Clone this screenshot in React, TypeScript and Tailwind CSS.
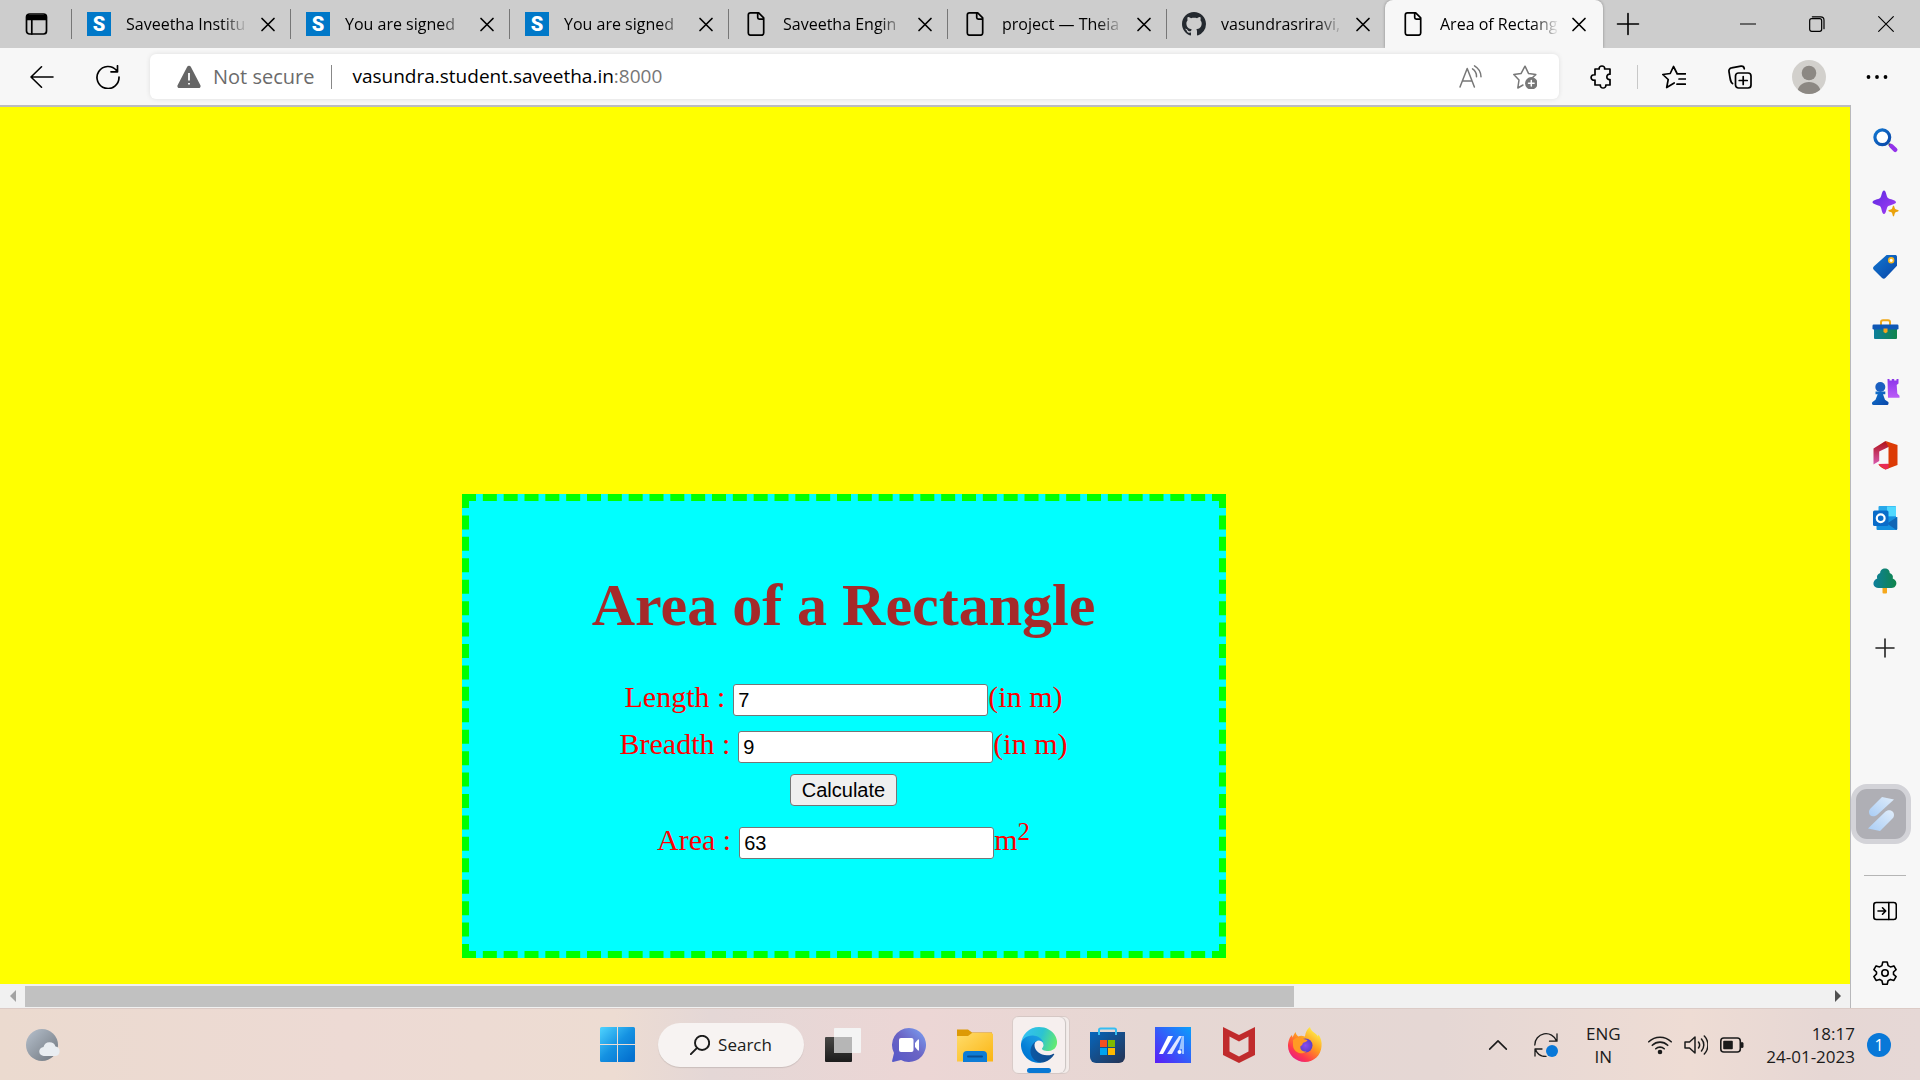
import { useState } from 'react';
import type { ReactNode } from 'react';

function Stroke({ children, className = 'size-6', width = 1.5 }: { children: ReactNode; className?: string; width?: number }) {
  return (
    <svg viewBox="0 0 24 24" className={className} fill="none" stroke="currentColor" strokeWidth={width} strokeLinecap="round" strokeLinejoin="round" aria-hidden="true">
      {children}
    </svg>
  );
}

function IconButton({ label, className, children }: { label: string; className?: string; children: ReactNode }) {
  return (
    <button type="button" aria-label={label} className={`flex shrink-0 items-center justify-center ${className ?? ''}`}>
      {children}
    </button>
  );
}

/* ---------- Tab strip ---------- */

const SiteIcon = () => (
  <span className="flex size-6 items-center justify-center bg-[#0078c8] font-[Roboto,sans-serif] text-xl font-black leading-6 text-white">S</span>
);

const PageIcon = () => (
  <Stroke className="size-6" width={1.7}>
    <path d="M5.5 .9h8.200l5 5V21a2.200 2.200 0 0 1-2.200 2.200h-11A2.200 2.200 0 0 1 3.300 21V3.100A2.200 2.200 0 0 1 5.500 .9zM12.700 1.200v4.300a1.600 1.600 0 0 0 1.600 1.600h4.200" transform="translate(1 0)" />
  </Stroke>
);

const GithubIcon = () => (
  <svg viewBox="0 0 16 16" className="size-6" fill="#24292f" aria-hidden="true">
    <path d="M8 0C3.580 0 0 3.580 0 8c0 3.540 2.290 6.530 5.470 7.590.4.070.55-.17.55-.38 0-.19-.01-.82-.01-1.490-2.010.37-2.530-.49-2.690-.94-.09-.23-.48-.94-.82-1.130-.28-.15-.68-.52-.01-.53.63-.01 1.080.58 1.230.82.72 1.210 1.870.87 2.330.66.070-.52.28-.87.510-1.070-1.780-.2-3.640-.89-3.640-3.950 0-.87.310-1.590.82-2.150-.08-.2-.36-1.020.080-2.120 0 0 .67-.21 2.200.82.64-.18 1.320-.27 2-.27s1.360.090 2 .27c1.530-1.040 2.200-.82 2.200-.82.44 1.100.16 1.920.080 2.120.510.56.82 1.270.82 2.150 0 3.070-1.870 3.750-3.650 3.950.29.25.54.73.54 1.480 0 1.070-.01 1.930-.01 2.200 0 .210.150.460.550.380A8.010 8.010 0 0 0 16 8c0-4.420-3.580-8-8-8z" />
  </svg>
);

const tabs = [
  { title: 'Saveetha Institu', icon: <SiteIcon /> },
  { title: 'You are signed', icon: <SiteIcon /> },
  { title: 'You are signed', icon: <SiteIcon /> },
  { title: 'Saveetha Engin', icon: <PageIcon /> },
  { title: 'project — Theia', icon: <PageIcon /> },
  { title: 'vasundrasriravi,', icon: <GithubIcon /> },
  { title: 'Area of Rectang', icon: <PageIcon />, active: true },
];

function TabStrip() {
  return (
    <header className="flex h-12 shrink-0 items-end bg-[#cdcdcd] text-black">
      <IconButton label="Tab actions" className="h-12 w-[71px]">
        <Stroke width={1.7}>
          <rect x="2.500" y="2" width="20" height="20" rx="3" />
          <path d="M3 3.500h19v3.800H3z" fill="currentColor" />
          <path d="M7.800 8v14" />
        </Stroke>
      </IconButton>
      <nav className="flex h-12 items-end" aria-label="Tabs">
        {tabs.map((t, i) => (
          <div
            key={i}
            className={
              t.active
                ? 'flex h-12 w-[218px] items-center rounded-t-lg bg-[#f7f7f7] pr-3 pl-4 shadow-[0_0_3px_rgba(0,0,0,0.35)]'
                : 'flex h-12 w-[219px] items-center pr-[10px]'
            }
          >
            {!t.active && <span className="mr-[15px] h-[30px] w-px shrink-0 bg-[#777]" />}
            <span className="shrink-0">{t.icon}</span>
            <span className="ml-[15px] flex-1 text-base whitespace-nowrap [mask-image:linear-gradient(to_right,black_78%,transparent_100%)]">
              {t.title}
            </span>
            <IconButton label="Close tab" className="ml-2 size-6">
              <Stroke width={1.7}>
                <path d="M6 6.500l12 12M18 6.500l-12 12" />
              </Stroke>
            </IconButton>
          </div>
        ))}
      </nav>
      <IconButton label="New tab" className="h-12 w-[50px]">
        <Stroke width={1.6}>
          <path d="M12 1.500v21M1.500 12h21" />
        </Stroke>
      </IconButton>
      <div className="ml-auto flex h-12">
        <IconButton label="Minimize" className="w-[69px]">
          <Stroke className="size-4" width={1.6}><path d="M0 12h24" /></Stroke>
        </IconButton>
        <IconButton label="Restore" className="w-[69px]">
          <Stroke className="size-4" width={1.8}>
            <rect x="1" y="4" width="18" height="19" rx="3" />
            <path d="M5 1.200h12.500a5 5 0 0 1 5 5V19" />
          </Stroke>
        </IconButton>
        <IconButton label="Close window" className="w-[69px]">
          <Stroke className="size-4" width={1.7}><path d="M1 1l22 22M23 1L1 23" /></Stroke>
        </IconButton>
      </div>
    </header>
  );
}

/* ---------- Toolbar ---------- */

function Toolbar() {
  return (
    <div className="flex h-[57px] shrink-0 items-center bg-[#f7f7f7] text-black">
      <IconButton label="Back" className="h-10 w-[84px]">
        <Stroke width={1.6}><path d="M23 12H1M11.500 1.800L1 12l10.500 10.200" /></Stroke>
      </IconButton>
      <IconButton label="Refresh" className="mr-[18px] h-10 w-12">
        <Stroke width={1.7}>
          <path d="M20.500 5.500A11 11 0 1 0 23 12M21.500 .8v6h-6.500" />
        </Stroke>
      </IconButton>
      <div className="flex h-[45px] flex-1 items-center rounded-md bg-white shadow-[0_0_5px_rgba(0,0,0,0.1)]">
        <svg viewBox="0 0 24 24" className="ml-[27px] size-6" aria-hidden="true">
          <path d="M10.200 1.800a2 2 0 0 1 3.600 0l9.600 18.400a2 2 0 0 1-1.800 2.900H2.400a2 2 0 0 1-1.800-2.900z" fill="#666" />
          <path d="M12 8v7.500M12 18v1.600" stroke="#fff" strokeWidth="1.800" />
        </svg>
        <span className="ml-3 text-[20px] text-[#6b6b6b]">Not secure</span>
        <span className="mr-5 ml-[17px] h-6 w-px bg-[#888]" />
        <div className="flex flex-1 items-center text-[19px]">
          <input aria-label="Address" className="field-sizing-content bg-transparent text-black outline-none" defaultValue="vasundra.student.saveetha.in" />
          <span className="text-[#777]">:8000</span>
        </div>
        <IconButton label="Read aloud" className="h-10 w-[54px] text-[#777]">
          <Stroke width={1.500}>
            <path d="M1 22L8.200 3.500 15.400 22M3.700 16h9M13.500 3.800a9 9 0 0 1 4 8M15.500 .8a13 13 0 0 1 6.500 11" />
          </Stroke>
        </IconButton>
        <IconButton label="Add to favorites" className="mr-[7px] h-10 w-[54px] text-[#777]">
          <Stroke width={1.500}>
            <path d="M10 20l-5.200 3 1.200-8L.8 9.600l7.200-1L12 1.200l3.600 7.400 7.200 1-3 2.600" />
            <circle cx="18.300" cy="18.300" r="5.500" fill="#777" />
            <path d="M18.300 15.500v5.600M15.500 18.300h5.600" stroke="#fff" />
          </Stroke>
        </IconButton>
      </div>
      <IconButton label="Extensions" className="ml-[10px] h-10 w-[66px]">
        <Stroke width={1.700}>
          <path d="M5 4h4.200c-.8-4 6.300-4 5.400 0H20v5.200c-4.200-.6-4.200 6 0 5.300V20h-4.200c.8 4-6.200 4-5.400 0H5v-4.800c-5.200.8-5.200-6.200 0-5.400z" />
        </Stroke>
      </IconButton>
      <span className="ml-[2px] h-6 w-px bg-[#c8c8c8]" />
      <IconButton label="Favorites" className="ml-1 h-10 w-16">
        <Stroke width={1.700}>
          <path d="M15 8.800h8.500M17 14h6.500M15 19.200h8.500M12.200 18l-7.500 4.500 1.500-8L.8 9.500l7.400-1L11.500 1.500l3.300 6.500" />
        </Stroke>
      </IconButton>
      <IconButton label="Collections" className="h-10 w-[68px]">
        <Stroke width={1.700}>
          <rect x="7.500" y="8" width="15.500" height="15" rx="3" />
          <path d="M15.200 11.500v8M11.200 15.500h8M4.500 18.500C2.500 17.500 2.300 15 1 6.500a3 3 0 0 1 2.500-3.600L13 1.200a3 3 0 0 1 3.300 2.600" />
        </Stroke>
      </IconButton>
      <IconButton label="Profile" className="h-10 w-[70px]">
        <svg viewBox="0 0 34 34" className="size-[34px]" aria-hidden="true">
          <clipPath id="avatar"><circle cx="17" cy="17" r="17" /></clipPath>
          <g clipPath="url(#avatar)">
            <rect width="34" height="34" fill="#d2d0cc" />
            <circle cx="17" cy="13" r="7.300" fill="#8c8883" />
            <path d="M5.500 34c-1.500-16 24.500-16 23 0z" fill="#8c8883" />
          </g>
        </svg>
      </IconButton>
      <IconButton label="Settings and more" className="mr-[10px] h-10 w-[66px]">
        <svg viewBox="0 0 24 24" className="size-6" aria-hidden="true">
          <circle cx="3.500" cy="12" r="1.900" /><circle cx="12" cy="12" r="1.900" /><circle cx="20.500" cy="12" r="1.900" />
        </svg>
      </IconButton>
    </div>
  );
}

/* ---------- Page ---------- */

const fieldClass = 'h-8 w-[255px] rounded-[3px] border border-[#767676] bg-white px-1 font-["Liberation_Sans",sans-serif] text-xl text-black';

function AreaPage() {
  const [length, setLength] = useState('7');
  const [breadth, setBreadth] = useState('9');
  const [area, setArea] = useState('63');
  return (
    <main className="flex min-h-0 flex-1 flex-col justify-end overflow-hidden bg-[#ffff00] pb-[26px]">
      <form
        className={'ml-[calc(25%-1px)] w-[764px] border-[7px] border-dashed border-[#00ff00] bg-[#00ffff] pt-[74px] pb-[92px] text-center font-["Liberation_Serif",serif] text-[30px] leading-[34px] text-[#ff0000]'}
        onSubmit={(e) => {
          e.preventDefault();
          setArea(String(Number(length) * Number(breadth)));
        }}
      >
        <h1 className="mb-[45px] text-6xl leading-[60px] font-bold text-[#a52a2a]">Area of a Rectangle</h1>
        <div className="flex h-[47px] items-baseline justify-center">
          <label htmlFor="length" className="mr-2">Length :</label>
          <input id="length" className={fieldClass} value={length} onChange={(e) => setLength(e.target.value)} />
          <span>(in m)</span>
        </div>
        <div className="flex h-[47px] items-baseline justify-center">
          <label htmlFor="breadth" className="mr-2">Breadth :</label>
          <input id="breadth" className={fieldClass} value={breadth} onChange={(e) => setBreadth(e.target.value)} />
          <span>(in m)</span>
        </div>
        <div className="mb-0.5 flex h-[47px] justify-center">
          <button type="submit" className={'h-8 rounded-[4px] border border-[#767676] bg-[#efefef] px-[11px] font-["Liberation_Sans",sans-serif] text-xl leading-7 text-black'}>
            Calculate
          </button>
        </div>
        <div className="flex items-baseline justify-center">
          <label htmlFor="area" className="mr-2">Area :</label>
          <input id="area" className={fieldClass} value={area} onChange={(e) => setArea(e.target.value)} />
          <span>m<sup className="-top-[10px] text-[25px]">2</sup></span>
        </div>
      </form>
    </main>
  );
}

function ScrollBar() {
  return (
    <div className="flex h-6 shrink-0 items-center bg-[#f1f1f1]">
      <span className="flex w-[25px] justify-center">
        <svg viewBox="0 0 6 12" className="h-3 w-1.5" fill="#a3a3a3" aria-hidden="true"><path d="M6 0v12L0 6z" /></svg>
      </span>
      <div className="h-[21px] flex-1"><div className="h-full w-[70.5%] bg-[#c1c1c1]" /></div>
      <span className="flex w-[25px] justify-center">
        <svg viewBox="0 0 6 12" className="h-3 w-1.5" fill="#505050" aria-hidden="true"><path d="M0 0v12l6-6z" /></svg>
      </span>
    </div>
  );
}

/* ---------- Sidebar ---------- */

const sideIcons: { label: string; art: ReactNode }[] = [
  {
    label: 'Search',
    art: (
      <>
        <path d="M16 16l2.500 2.500" stroke="#444" strokeWidth="2.500" />
        <circle cx="9.300" cy="9.300" r="7.400" fill="#fff" stroke="url(#sbBlue)" strokeWidth="3.200" />
        <path d="M18.300 18l4 3.800" stroke="#9333ea" strokeWidth="4.400" strokeLinecap="round" />
      </>
    ),
  },
  {
    label: 'Discover',
    art: (
      <>
        <path d="M11-.5c2.300 0 2.200 6 4 7.500 1.700 1.400 8 2 8 4.200s-6.300 2.600-8 4.100c-1.800 1.600-1.700 7.700-4 7.700s-2.200-6.200-3.900-7.700C5.500 13.800-.5 13.400-.5 11.200S5.500 8.400 7.100 7C8.800 5.500 8.700-.5 11-.5z" fill="url(#sbPurple)" />
        <path d="M20.500 14.500c.9 0 1 2.900 1.800 3.600.6.6 3.500.8 3.500 1.700s-2.900 1.100-3.500 1.700c-.8.700-.9 4-1.800 4s-1-3.300-1.800-4c-.6-.6-3.500-.8-3.500-1.700s2.900-1.100 3.500-1.700c.8-.7.900-3.600 1.800-3.600z" fill="#eaa20c" />
      </>
    ),
  },
  {
    label: 'Shopping',
    art: (
      <>
        <path d="M13 1.500L1 12.300c-1.300 1.300-1.300 2.300 0 3.600l7.800 7.800c1.500 1.300 2.500 1.300 3.800 0L24 11.700V3c0-1.500-.8-2-2-2h-7.500c-.6 0-1.100.1-1.500.5z" fill="url(#sbBlue)" />
        <circle cx="18.200" cy="6.300" r="2.400" fill="#fff" stroke="#fbb81d" strokeWidth="1.600" />
      </>
    ),
  },
  {
    label: 'Tools',
    art: (
      <>
        <path d="M8 8V5.200c0-1.200.8-2 2-2h5c1.200 0 2 .8 2 2V8" fill="none" stroke="#f0a818" strokeWidth="2" />
        <rect x="1" y="10" width="23" height="12" rx="1" fill="url(#sbTeal)" />
        <rect x="-.5" y="7.500" width="26" height="5" rx="1.200" fill="#0f57b5" />
        <path d="M10.500 11.500h4V15l-2 1.300-2-1.300z" fill="#f9a51a" />
      </>
    ),
  },
  {
    label: 'Games',
    art: (
      <>
        <path d="M14.500-1h2v1.500h2.300V-1h2.400v1.500h2.300V-1h2v4.500L23.700 5l.6 8.500 2.200 2.300v2H15z" fill="url(#sbPurple2)" />
        <circle cx="7.300" cy="7" r="5" fill="#1a5fc0" />
        <path d="M2.500 11.500h9.800v2.700H10l2 5.500 3.300 2.300c.6.800.3 3-1 3H.5c-1.600 0-2-2.200-1-3l3-2.300 2.200-5.500H2.500z" fill="url(#sbBlue)" />
      </>
    ),
  },
  {
    label: 'Microsoft 365',
    art: (
      <>
        <path d="M.5 5.500L12.500-2l4 5.500L6.200 8.500V18L.5 21.500z" fill="url(#sbRed)" />
        <path d="M12.500-2L24.500 2v20L12.500 26.500c-2.500-.7-5-2.500-6.700-4.500l9.700-1V4z" fill="#dc3b06" />
        <path d="M5 21l10.500-.3v4.700l-3 1.100z" fill="#e82b54" />
      </>
    ),
  },
  {
    label: 'Outlook',
    art: (
      <>
        <rect x="5.500" y="0" width="17.500" height="14" rx="1" fill="#28a8ea" />
        <path d="M14 .5h9V10h-9z" fill="#50d9ff" />
        <path d="M3.500 11h20.700v12a1 1 0 0 1-1 1H4.500a1 1 0 0 1-1-1z" fill="#1490df" />
        <path d="M24.200 11L14 17.500l9 6.300c.7 0 1.200-.4 1.200-1z" fill="#1066b5" />
        <rect x="0" y="4.500" width="15.500" height="15.500" rx="1.500" fill="#0a6cc9" />
        <circle cx="7.700" cy="12.200" r="3.900" fill="none" stroke="#fff" strokeWidth="2.200" />
      </>
    ),
  },
  {
    label: 'Drop',
    art: (
      <>
        <rect x="9.500" y="17" width="4.500" height="7.500" rx="1" fill="#f5a81c" />
        <path d="M12-.5c2.800 0 4.800 2 4.700 4.500 2.700.8 3.800 3.300 3 5.500 3.300 1.500 4.200 4 3.500 6-.7 2.500-2.500 3.500-5 3.500H5.500c-2.500 0-4.500-1.300-5-3.500-.5-2.500 1-5 3.700-6-.8-2.200.3-4.700 3-5.500C7.100 1.500 9.200-.5 12-.5z" fill="url(#sbTeal)" />
      </>
    ),
  },
];

function SideBar() {
  return (
    <aside className="flex w-[70px] shrink-0 flex-col items-center border-l border-[#b8b8bb] bg-[#f7f7f7] pt-[3px] pr-px">
      <svg className="absolute size-0" aria-hidden="true">
        <defs>
          <linearGradient id="sbBlue" x1="0" y1="0" x2="1" y2="1"><stop stopColor="#1277d0" /><stop offset="1" stopColor="#0a46a8" /></linearGradient>
          <linearGradient id="sbPurple" x1="0" y1="0" x2="1" y2="1"><stop stopColor="#5b2be0" /><stop offset="1" stopColor="#a63cf5" /></linearGradient>
          <linearGradient id="sbPurple2" x1="0" y1="0" x2="0" y2="1"><stop stopColor="#8b35ea" /><stop offset="1" stopColor="#bb5cf7" /></linearGradient>
          <linearGradient id="sbTeal" x1="0" y1="0" x2="1" y2="0"><stop stopColor="#0d7f9c" /><stop offset="1" stopColor="#10854a" /></linearGradient>
          <linearGradient id="sbRed" x1="0" y1="0" x2="0" y2="1"><stop stopColor="#b01217" /><stop offset="1" stopColor="#d85ab0" /></linearGradient>
        </defs>
      </svg>
      {sideIcons.map((s) => (
        <IconButton key={s.label} label={s.label} className="h-[63px] w-full">
          <svg viewBox="0 0 24 24" className="size-6 overflow-visible" fill="none" aria-hidden="true">{s.art}</svg>
        </IconButton>
      ))}
      <IconButton label="Customize sidebar" className="mt-1 h-[63px] w-full text-[#222]">
        <Stroke width={1.600}><path d="M12 3v18M3 12h18" /></Stroke>
      </IconButton>
      <IconButton label="Assistant" className="mt-auto mb-[31px] size-[60px] self-start rounded-2xl border-[5px] border-[#d3d3d8] bg-[#afafb5]">
        <svg viewBox="0 0 28 36" className="h-9 w-7" aria-hidden="true">
          <defs>
            <linearGradient id="wing" x1="0" y1="1" x2="1" y2="0"><stop stopColor="#a9cdf5" /><stop offset="1" stopColor="#e0edfb" /></linearGradient>
          </defs>
          <path d="M15 1l12 2.500L10 19c-3 2-8 2-8-3 0-2 1-3 2-4z" fill="url(#wing)" />
          <path d="M13 35L1 32.500 18 16c3-3 9-2 9 3 0 2-1 3-2 4z" fill="url(#wing)" />
        </svg>
      </IconButton>
      <span className="h-px w-[42px] bg-[#b5b5b5]" />
      <IconButton label="Hide sidebar" className="mt-1 h-[61px] w-full text-black">
        <Stroke width={1.600}>
          <rect x=".8" y="3.500" width="22.500" height="17" rx="2.500" />
          <path d="M15.800 3.500v17M5 12h7.500M9.500 8.800l3.200 3.200-3.200 3.200" />
        </Stroke>
      </IconButton>
      <IconButton label="Settings" className="mb-1 h-[63px] w-full text-black">
        <Stroke width={1.600}>
          <circle cx="12" cy="12" r="3.200" />
          <path d="M9.800 1h4.400l.9 3.600 2.300 1.300 3.500-1 2.200 3.800L20.500 11v2.400l2.600 2.200-2.200 3.800-3.500-1-2.300 1.300-.9 3.500H9.800l-.9-3.500-2.300-1.300-3.500 1L.9 15.600 3.500 13v-2L.9 8.700l2.200-3.800 3.500 1 2.300-1.300z" />
        </Stroke>
      </IconButton>
    </aside>
  );
}

/* ---------- Taskbar ---------- */

const WindowsLogo = () => (
  <svg viewBox="0 0 35 35" className="size-[35px]" aria-hidden="true">
    <defs>
      <linearGradient id="win" gradientUnits="userSpaceOnUse" x1="0" y1="0" x2="30" y2="32"><stop stopColor="#4fd4ff" /><stop offset=".55" stopColor="#1592e2" /><stop offset="1" stopColor="#0572d0" /></linearGradient>
    </defs>
    <path d="M1.500 0H17v17H0V1.500A1.500 1.500 0 0 1 1.500 0zM18 0h15.500A1.500 1.500 0 0 1 35 1.500V17H18zM0 18h17v17H1.500A1.500 1.500 0 0 1 0 33.500zM18 18h17v15.500a1.500 1.500 0 0 1-1.500 1.500H18z" fill="url(#win)" />
  </svg>
);

const TaskView = () => (
  <svg viewBox="0 0 36 34" className="h-[34px] w-9" aria-hidden="true">
    <defs><linearGradient id="tvd" x1="0" y1="0" x2="0" y2="1"><stop stopColor="#484846" /><stop offset="1" stopColor="#1c1c1c" /></linearGradient></defs>
    <rect x="0" y="9" width="27" height="25" rx="1" fill="url(#tvd)" />
    <rect x="9" y="0" width="27" height="25" rx="1" fill="#f4f4f4" />
    <path d="M9 9h18v16H9z" fill="#b6b6b6" />
  </svg>
);

const Chat = () => (
  <svg viewBox="0 0 34 34" className="size-[34px]" aria-hidden="true">
    <defs><linearGradient id="chat" x1="1" y1="0" x2="0" y2="1"><stop stopColor="#7ba4f5" /><stop offset=".5" stopColor="#6a63c4" /><stop offset="1" stopColor="#5558c8" /></linearGradient></defs>
    <path d="M17 0a17 17 0 1 1-8 32L1 34c-1 0-1-1-.7-2L2 25A17 17 0 0 1 17 0z" fill="url(#chat)" />
    <rect x="7" y="10" width="14.500" height="14" rx="2" fill="#fff" />
    <path d="M23 15l3-3.500h1v11h-1L23 19z" fill="#fff" />
  </svg>
);

const Folder = () => (
  <svg viewBox="0 0 36 34" className="h-[34px] w-9" aria-hidden="true">
    <defs><linearGradient id="fol" x1="0" y1="0" x2="1" y2="1"><stop stopColor="#ffdc6b" /><stop offset="1" stopColor="#fbb512" /></linearGradient></defs>
    <path d="M0 1.500h11l4 3h20V12H0z" fill="#dd9a06" />
    <path d="M0 8h11l4-3h19.500L36 6v27.500H0z" fill="url(#fol)" />
    <path d="M6 34V27a4 4 0 0 1 4-4h16a4 4 0 0 1 4 4v7z" fill="#0d7cd6" />
    <path d="M11 28.500h14" stroke="#0a4f94" strokeWidth="2" strokeLinecap="round" />
  </svg>
);

const Edge = () => (
  <svg viewBox="0 0 256 256" className="size-9" aria-hidden="true">
    <defs>
      <linearGradient id="e1" gradientUnits="userSpaceOnUse" x1="63" y1="177" x2="241" y2="177"><stop stopColor="#0c59a4" /><stop offset="1" stopColor="#114a8b" /></linearGradient>
      <linearGradient id="e2" gradientUnits="userSpaceOnUse" x1="157" y1="96" x2="46" y2="220"><stop stopColor="#1b9de2" /><stop offset=".3" stopColor="#1595df" /><stop offset=".7" stopColor="#0680d7" /><stop offset="1" stopColor="#0078d4" /></linearGradient>
      <linearGradient id="e3" gradientUnits="userSpaceOnUse" x1="20" y1="50" x2="250" y2="130"><stop stopColor="#35c1f1" /><stop offset=".5" stopColor="#2cc3d2" /><stop offset="1" stopColor="#66eb6e" /></linearGradient>
    </defs>
    <path d="M231 190.500c-3.400 1.800-6.900 3.400-10.500 4.700a101.700 101.700 0 0 1-36 6.400c-47.400 0-88.700-32.500-88.700-74.500a31.500 31.500 0 0 1 16.400-27.300c-42.800 1.800-53.800 46.400-53.800 72.500 0 74 68.100 81.400 82.800 81.400 7.900 0 19.800-2.300 27-4.600l1.300-.4a128.300 128.300 0 0 0 66.600-52.800 4 4 0 0 0-5.100-5.400z" fill="url(#e1)" />
    <path d="M105.700 241.400A79.200 79.200 0 0 1 83 220.100a80.700 80.700 0 0 1 29.200-120.300c3.100-1.500 8.400-4.200 15.600-4a32.400 32.400 0 0 1 25.700 13 31.900 31.900 0 0 1 6.300 18.700c0-.2 24.500-79.600-80-79.600-43.900 0-80 41.700-80 78.200a130.200 130.200 0 0 0 12.100 56 128 128 0 0 0 156.400 67 75.600 75.600 0 0 1-62.500-7.700z" fill="url(#e2)" />
    <path d="M152.300 148.900c-.8 1-3.300 2.500-3.300 5.700 0 2.600 1.700 5.200 4.800 7.300 14.400 10.100 41.600 8.700 41.700 8.700a59.600 59.600 0 0 0 30.300-8.400 61.400 61.400 0 0 0 30.400-52.900c.3-22.400-8-37.300-11.300-43.900C223.500 23.900 177.700 0 128 0A128 128 0 0 0 0 126.200c.5-36.500 36.800-66 80-66 3.500 0 23.500.3 42 10 16.300 8.600 24.900 18.900 30.800 29.200 6.200 10.700 7.300 24.100 7.300 29.500s-2.700 13.300-7.800 20z" fill="url(#e3)" />
  </svg>
);

const Store = () => (
  <svg viewBox="0 0 35 36" className="h-9 w-[35px]" aria-hidden="true">
    <defs><linearGradient id="sto" x1="0" y1="0" x2="1" y2="1"><stop stopColor="#0666bd" /><stop offset="1" stopColor="#263352" /></linearGradient></defs>
    <path d="M0 5h35v25a6 6 0 0 1-6 6H6a6 6 0 0 1-6-6z" fill="url(#sto)" />
    <path d="M9 8V3a1.500 1.500 0 0 1 1.500-1.500h14A1.500 1.500 0 0 1 26 3v5" fill="none" stroke="#35bdf2" strokeWidth="2" />
    <path d="M10 13h7v7h-7z" fill="#f25022" /><path d="M18 13h7v7h-7z" fill="#7fba00" />
    <path d="M10 21h7v7h-7z" fill="#00a4ef" /><path d="M18 21h7v7h-7z" fill="#ffb900" />
  </svg>
);

const MyAsus = () => (
  <svg viewBox="0 0 36 36" className="size-9" aria-hidden="true">
    <defs><linearGradient id="asu" x1="0" y1="1" x2="1" y2="0"><stop stopColor="#5b1cf6" /><stop offset="1" stopColor="#0aa0fc" /></linearGradient></defs>
    <path d="M0 0h36v36H0z" fill="url(#asu)" />
    <path d="M13 9h5L8 27H4z" fill="#fff" />
    <path d="M24 9h3L17 27h-5z" fill="#dfe6ff" />
    <path d="M27 9h2v18h-2zM27 9v13l-3 1z" fill="#9cc3ff" />
    <circle cx="24.500" cy="25" r="2" fill="#fff" />
  </svg>
);

const McAfee = () => (
  <svg viewBox="0 0 32 36" className="h-9 w-8" aria-hidden="true">
    <path d="M0 0l16 8L32 0v28l-16 8-16-8zM6.500 9.500v15L16 29.500l9.500-5v-15L16 14.500z" fill="#c02b2c" fillRule="evenodd" />
  </svg>
);

const Firefox = () => (
  <svg viewBox="0 0 34 36" className="h-9 w-[34px]" aria-hidden="true">
    <defs>
      <linearGradient id="ff1" x1=".85" y1=".1" x2=".2" y2="1"><stop stopColor="#fff04a" /><stop offset=".4" stopColor="#ff9a1f" /><stop offset=".75" stopColor="#ff3a4c" /><stop offset="1" stopColor="#e3188f" /></linearGradient>
      <radialGradient id="ff2"><stop stopColor="#8a4cf0" /><stop offset="1" stopColor="#5b3fc8" /></radialGradient>
    </defs>
    <path d="M22 0c1 5 7 6.500 8 9.500l.5-2C33 11 34 15 33.500 19.500 33 28 26 35 17 35S0 28 0 19C0 14 2 9.500 4 8l.5 2.500C5.500 8.500 6.500 6.500 7.500 5c.5 2.500 1.500 3.500 3 4.500C12 8.500 14 8.500 17 9.500c.5-4 2-7.500 5-9.500z" fill="url(#ff1)" />
    <circle cx="17.500" cy="18.500" r="7" fill="url(#ff2)" />
    <path d="M5 13c3-3 7-2.500 10.500-1l4 1c-.5 2-3.500 2-4.500 3-1 1.500 0 2-2.500 3-1 4 3 6 6 5.500-5 4-13 1-13.500-6z" fill="#ff9a24" />
  </svg>
);

function Task({ label, children }: { label: string; children: ReactNode }) {
  return <IconButton label={label} className="h-14 w-[66px]">{children}</IconButton>;
}

function Taskbar() {
  return (
    <footer className="flex h-[72px] shrink-0 items-center border-t border-[#dccbc6] bg-[linear-gradient(90deg,#ebdacf_0%,#eddad4_18%,#eddcd2_32%,#e4d7d6_37%,#ecd6d5_48%,#e6d7d3_60%,#e5d7d4_75%,#eedcd4_88%,#e6d7d4_95%,#e6d8d6_100%)] text-[#1b1b1b]">
      <div className="flex flex-1 items-center">
        <IconButton label="Weather" className="ml-[26px]">
          <svg viewBox="0 0 34 32" className="h-8 w-[34px]" aria-hidden="true">
            <defs><linearGradient id="moon" x1="0" y1="0" x2="1" y2="1"><stop stopColor="#b7c1cd" /><stop offset="1" stopColor="#6e757d" /></linearGradient></defs>
            <circle cx="16" cy="16" r="16" fill="url(#moon)" />
            <path d="M18 27a4.500 4.500 0 0 1-.5-9 6.300 6.300 0 0 1 12-.5 4.800 4.800 0 0 1 0 9.500z" fill="#e9edf1" />
          </svg>
        </IconButton>
      </div>
      <div className="flex items-center pl-0.5">
        <Task label="Start"><WindowsLogo /></Task>
        <button type="button" className="mr-[6px] ml-2 flex h-11 w-[146px] items-center justify-center gap-2 rounded-full bg-[#f7f3f2] text-[17px] shadow-[0_1px_1px_rgba(0,0,0,0.12)]">
          <Stroke className="size-5" width={2.300}>
            <circle cx="14.500" cy="9.500" r="8.500" />
            <path d="M8.500 15.500L1 23" />
          </Stroke>
          Search
        </button>
        <Task label="Task view"><TaskView /></Task>
        <Task label="Chat"><Chat /></Task>
        <Task label="File Explorer"><Folder /></Task>
        <div className="flex w-[66px] justify-center">
          <div className="rounded-md border border-[#d9cbc8] bg-[#f3ecea] pr-1">
            <button type="button" aria-label="Microsoft Edge" className="relative flex h-14 w-[52px] items-center justify-center rounded-md bg-[#f6efee] shadow-[1px_0_1px_rgba(0,0,0,0.18)]">
              <Edge />
              <span className="absolute bottom-0 h-[5px] w-6 rounded-full bg-[#0878d4]" />
            </button>
          </div>
        </div>
        <Task label="Microsoft Store"><Store /></Task>
        <Task label="MyASUS"><MyAsus /></Task>
        <Task label="McAfee"><McAfee /></Task>
        <Task label="Firefox"><Firefox /></Task>
      </div>
      <div className="flex flex-1 items-center justify-end">
        <IconButton label="Show hidden icons" className="w-12">
          <Stroke className="size-5" width={1.900}><path d="M2 17l10-10 10 10" /></Stroke>
        </IconButton>
        <IconButton label="Update" className="w-12">
          <Stroke width={1.300}>
            <path d="M.8 12A11.200 11.200 0 0 1 22.500 8M23 .8v7.400h-7.500M12 23.500A11 11 0 0 1 1.500 16.500M1 23v-7h7" />
            <circle cx="18" cy="18" r="6" fill="#0878d8" stroke="none" />
          </Stroke>
        </IconButton>
        <button type="button" className="w-[66px] text-center text-[17px] leading-[23px]">ENG<br />IN</button>
        <IconButton label="Network" className="ml-[6px] w-9">
          <Stroke width={1.600}>
            <path d="M.8 8.800a16 16 0 0 1 22.400 0M4.300 12.300a11 11 0 0 1 15.400 0M7.800 15.800a6 6 0 0 1 8.400 0" />
            <circle cx="12" cy="19" r="1.500" fill="currentColor" />
          </Stroke>
        </IconButton>
        <IconButton label="Volume" className="w-9">
          <Stroke width={1.500}>
            <path d="M1 9h4.500L11 4v16l-5.500-5H1zM14.500 9a5 5 0 0 1 0 6M17.500 6a9 9 0 0 1 0 12M20.300 3a13 13 0 0 1 0 18" />
          </Stroke>
        </IconButton>
        <IconButton label="Battery" className="w-9">
          <Stroke width={1.600}>
            <rect x=".8" y="5" width="19.500" height="14" rx="3" />
            <path d="M4 8.500h8v7H4z" fill="currentColor" />
            <path d="M22 10.500v3" strokeWidth="3" />
          </Stroke>
        </IconButton>
        <button type="button" className="ml-4 text-right text-[17px] leading-[23px] whitespace-nowrap">18:17<br />24-01-2023</button>
        <span className="mr-[29px] ml-3 flex size-6 items-center justify-center rounded-full bg-[#0878d8] text-base text-white">1</span>
      </div>
    </footer>
  );
}

export default function App() {
  return (
    <div className={'flex h-screen flex-col overflow-hidden font-["Open_Sans","Noto_Sans",sans-serif]'}>
      <TabStrip />
      <Toolbar />
      <div className="flex min-h-0 flex-1 bg-[#f7f7f7]">
        <div className="flex min-w-0 flex-1 flex-col border-t-2 border-[#bcbcbf]">
          <AreaPage />
          <ScrollBar />
        </div>
        <SideBar />
      </div>
      <Taskbar />
    </div>
  );
}
